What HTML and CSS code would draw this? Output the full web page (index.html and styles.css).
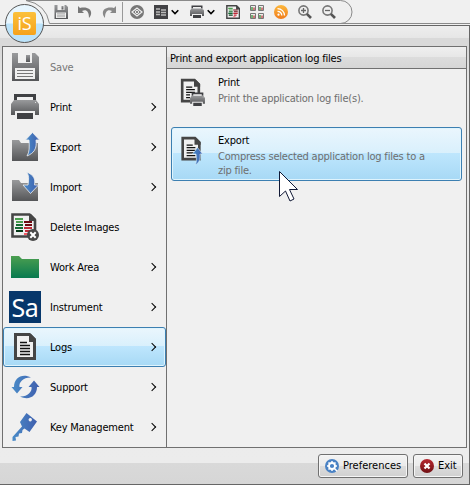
FILE: index.html
```html
<!DOCTYPE html>
<html lang="en">
<head>
<meta charset="utf-8">
<title>Application menu</title>
<link rel="stylesheet" href="styles.css">
</head>
<body>
<svg class="defs" width="0" height="0">
  <defs>
    <linearGradient id="gray" x2="0" y2="1"><stop stop-color="#999a9c"/><stop offset="1" stop-color="#555658"/></linearGradient>
    <linearGradient id="green" x2="0" y2="1"><stop stop-color="#4c9f50"/><stop offset="1" stop-color="#087a50"/></linearGradient>
    <linearGradient id="blue" x2="1" y2="0"><stop stop-color="#4a8cc8"/><stop offset="1" stop-color="#3f5fae"/></linearGradient>
    <linearGradient id="red" x2="0" y2="1"><stop stop-color="#b82830"/><stop offset="1" stop-color="#701014"/></linearGradient>
    <linearGradient id="orange" x2="0" y2="1"><stop stop-color="#fcb83c"/><stop offset="1" stop-color="#f07c1c"/></linearGradient>
    <symbol id="save" viewBox="0 0 32 32">
      <path fill="url(#gray)" d="M3 2h23l4 4v24H3z"/><path fill="#f0f0f0" d="M9 2h14v10H9zM6 17h20v11H6z"/><path fill="url(#gray)" d="M17 4h4v7h-4z"/><path stroke="#777" d="M8 19.500h16M8 22.500h16M8 25.500h16"/>
    </symbol>
    <symbol id="printer" viewBox="0 0 32 32">
      <path fill="#404144" d="M5 3h22v6h-3V6H8v3H5zM8 22h16v6H8z"/><path fill="url(#gray)" d="M5 9h22l3 4v11h-4v-4H6v4H2V13z"/><path fill="#ddd" d="M26 11h1v1h-1z"/>
    </symbol>
    <symbol id="folder" viewBox="0 0 32 32"><path d="M3 30V9h7l2 3h17v18z"/></symbol>
    <symbol id="doc" viewBox="0 0 32 32">
      <path fill="#f0f0f0" stroke="#454545" stroke-width="3" d="M6.500 3.500h14l5 5v19h-19z"/><path fill="#454545" d="M20 3h2l5 5v3h-7z"/><path stroke="#111" stroke-width="1.500" d="M11 11.500h7M11 14.500h10M11 17.500h10M11 20.500h10M11 23.500h10"/>
    </symbol>
    <symbol id="gels" viewBox="0 0 32 32">
      <path fill="#f0f0f0" stroke="#454545" stroke-width="2.600" d="M3.500 3.500h17l5.500 5.500v16.500h-22.500z"/><path fill="#454545" d="M20 3h2l5 5v2h-7z"/>
      <path stroke="#4c9f50" stroke-width="2" d="M6 8h8M7 11h7"/><path stroke="#176b35" stroke-width="2" d="M7 14h7M6 17h8"/><path stroke="#063818" stroke-width="2" d="M7 20h7"/>
      <path stroke="#700a12" stroke-width="2" d="M15 11h8M16 14h7"/><path stroke="#c02a38" stroke-width="2" d="M15 17h8M16 20h5"/><path stroke="#f05a64" stroke-width="2" d="M15 23h4"/>
    </symbol>
    <symbol id="chev" viewBox="0 0 8 8"><path fill="none" stroke="#000" stroke-width="1.600" d="M.7 2.200 4 5.500l3.300-3.300"/></symbol>
    <symbol id="arrowup" viewBox="0 0 32 32"><path stroke="#f0f0f0" stroke-width=".8" d="M18 25c2.500-4 2.500-9 2-16h-3.500L23.500 1.500 30.500 9H27c1 9-2 13-9 16z"/></symbol>
  </defs>
</svg>

<div class="toolbar">
  <div class="tools">
    <span class="tool"><svg width="16" height="16"><use href="#save"/></svg></span>
    <span class="tool"><svg width="16" height="14" viewBox="0 0 16 14"><path fill="#777" d="M1 1v7h6L5 6c4-2 7 0 7 7 5-6 1-12-9-10z"/></svg></span>
    <span class="tool"><svg width="16" height="14" viewBox="0 0 16 14"><path fill="#888" d="M15 1v7H9l2-2c-4-2-7 0-7 7C-1 7 3 1 13 3z"/></svg></span>
    <span class="sep"></span>
    <span class="tool"><svg width="14" height="14" viewBox="0 0 14 14"><circle cx="7" cy="7" r="7" fill="#777"/><path fill="none" stroke="#f0f0f0" stroke-width="1.200" d="m2 7 5-4 5 4-5 4z"/><circle cx="7" cy="7" r="1.600" fill="none" stroke="#f0f0f0"/></svg></span>
    <span class="tool"><svg width="14" height="14" viewBox="0 0 14 14"><path fill="#424245" d="M0 0h14v14H0z"/><path stroke="#bbb" stroke-width="1.500" d="M2 4h4M2 7h4M2 9.500h4M7 5h5M7 7.500h5M7 10h5"/></svg></span>
    <span class="drop"><svg width="8" height="8"><use href="#chev"/></svg></span>
    <span class="tool"><svg width="16" height="16"><use href="#printer"/></svg></span>
    <span class="drop"><svg width="8" height="8"><use href="#chev"/></svg></span>
    <span class="tool"><svg width="14" height="14" viewBox="2 2 25 25"><use href="#gels" width="32" height="32"/></svg></span>
    <span class="tool"><svg width="14" height="14" viewBox="0 0 14 14"><g fill="#eee" stroke="#777"><path d="M.5.5h5v5h-5zM8.500.5h5v5h-5zM.5 8.500h5v5h-5zM8.500 8.500h5v5h-5z"/></g><path stroke="#4c9f50" stroke-width="1.500" d="M2 2v3M10 2v3M2 10v3M10 10v3"/><path stroke="#c03a40" stroke-width="1.300" d="M4 2.500v2.500M12 2.500v2.500M4 10.500v2.500M12 10.500v2.500"/></svg></span>
    <span class="tool"><svg width="14" height="14" viewBox="0 0 14 14"><circle cx="7" cy="7" r="7" fill="url(#orange)"/><circle cx="4.500" cy="9.700" r="1.100" fill="#fff"/><path fill="none" stroke="#fff" stroke-width="1.300" d="M3.500 6.300a4.300 4.300 0 0 1 4.300 4.300M3.500 3.600a7 7 0 0 1 7 7"/></svg></span>
    <span class="tool"><svg width="14" height="14" viewBox="0 0 14 14"><circle cx="5.500" cy="5.500" r="4.600" fill="none" stroke="#777" stroke-width="1.600"/><path stroke="#555" stroke-width="2.600" d="m8.800 8.800 4.200 4.200"/><path stroke="#666" stroke-width="1.300" d="M3 5.500h5M5.500 3v5"/></svg></span>
    <span class="tool"><svg width="14" height="14" viewBox="0 0 14 14"><circle cx="5.500" cy="5.500" r="4.600" fill="none" stroke="#777" stroke-width="1.600"/><path stroke="#555" stroke-width="2.600" d="m8.800 8.800 4.200 4.200"/><path stroke="#666" stroke-width="1.300" d="M3 5.500h5"/></svg></span>
  </div>
  <svg class="outline" width="470" height="25" viewBox="0 0 470 25" fill="none" stroke="#8a8a8a"><path d="M26 .5h314.500a11.500 11.500 0 0 1 0 23M26 .5Q46 4 49.500 23.500H470"/></svg>
</div>
<div class="orb"><span class="orb-tile">iS</span></div>

<div class="window">
  <div class="panes">
    <nav class="menu">
      <div class="row disabled"><svg width="32" height="32"><use href="#save"/></svg><span>Save</span></div>
      <div class="row more"><svg width="32" height="32"><use href="#printer"/></svg><span>Print</span></div>
      <div class="row more"><svg width="32" height="32"><use href="#folder" fill="url(#gray)"/><use href="#arrowup" fill="url(#blue)"/></svg><span>Export</span></div>
      <div class="row more"><svg width="32" height="32"><use href="#folder" fill="url(#gray)"/><path fill="url(#blue)" stroke="#f0f0f0" stroke-width=".8" d="M17.500 1c7.500 3 9 7 8 13h4l-8 8.500-7.500-8.500h5c1-6 1-10-1.500-13z"/></svg><span>Import</span></div>
      <div class="row"><svg width="32" height="32"><use href="#gels"/><circle cx="24" cy="24" r="6" fill="#484848"/><path stroke="#fff" stroke-width="2" d="m21.300 21.300 5.400 5.400m0-5.400-5.400 5.400"/></svg><span>Delete Images</span></div>
      <div class="row more"><svg width="32" height="32"><path fill="url(#green)" d="M2 27V5h8l3 3h17v19z"/></svg><span>Work Area</span></div>
      <div class="row more"><b class="sa">Sa</b><span>Instrument</span></div>
      <div class="row more selected"><svg width="32" height="32"><use href="#doc"/></svg><span>Logs</span></div>
      <div class="row more"><svg width="32" height="32" fill="url(#blue)"><path d="M22 6.500C13 2 5 7 5 16H2.500l5.500 6.500 5.500-6.500H10.500c-1-5 4.500-10 11.500-9.500zM11 25.500C20 30 28 25 28 16h2.500l-5.500-6.500-5.500 6.500h3c1 5-4.500 10-11.500 9.500z"/></svg><span>Support</span></div>
      <div class="row more"><svg width="32" height="32"><path fill="url(#blue)" fill-rule="evenodd" d="M17.500 2 28 10.500 20.500 21l-5-3.500-2 1.500-.5 3-3 .5-.5 3-3 .5L7 29.500 3.500 30v-4L13 15.500 11 11zm3.700 5a1.700 1.700 0 1 0 .1 0z"/></svg><span>Key Management</span></div>
    </nav>
    <section class="detail">
      <h1>Print and export application log files</h1>
      <div class="option">
        <svg width="32" height="32"><svg x="-1" y="0" width="29" height="28"><use href="#doc"/></svg><rect x="13" y="17" width="15" height="12" fill="#f0f0f0"/><svg x="12" y="14" width="17" height="17"><use href="#printer"/></svg></svg>
        <div class="copy"><strong>Print</strong><p>Print the application log file(s).</p></div>
      </div>
      <div class="option selected">
        <svg width="32" height="32"><svg x="0" y="0" width="28" height="28"><use href="#doc"/></svg><path fill="url(#blue)" stroke="#d9effc" stroke-width=".6" d="M18 30c2-3 1.500-6 1-11h-3.500l5-6.500 5 6.500H23c.5 6-1 9-5 11z"/></svg>
        <div class="copy"><strong>Export</strong><p>Compress selected application log files to a<br>zip file.</p></div>
      </div>
    </section>
  </div>
  <footer class="footer">
    <button class="prefs"><svg width="14" height="14" viewBox="0 0 14 14"><circle cx="7" cy="7" r="7" fill="#4a82c4"/><circle cx="7" cy="7" r="3" fill="none" stroke="#fff" stroke-width="1.800"/><path stroke="#fff" stroke-width="1.500" d="M7 2v2M7 10v2M2 7h2M10 7h2M3.500 3.500l1.300 1.300M10.500 3.500 9.200 4.800M3.500 10.500l1.300-1.300M9.200 9.200l3 3"/></svg><span>Preferences</span></button>
    <button class="exit"><svg width="14" height="14" viewBox="0 0 14 14"><circle cx="7" cy="7" r="7" fill="url(#red)"/><path stroke="#fff" stroke-width="2.200" d="m4.500 4.500 5 5m0-5-5 5"/></svg><span>Exit</span></button>
  </footer>
</div>
<svg class="cursor" width="22" height="33" viewBox="0 0 22 33"><path fill="#fff" stroke="#111936" d="M.5.5v25l6-5.500 4.500 10 4-2-4.500-9.500h8z"/></svg>
</body>
</html>
```

FILE: styles.css
```css
* { box-sizing: border-box; }
body {
  margin: 0;
  width: 470px;
  height: 485px;
  overflow: hidden;
  position: relative;
  background: #f0f0f0;
  color: #000;
  font: 11px/16px "DejaVu Sans Condensed", "DejaVu Sans", sans-serif;
  font-stretch: condensed;
  letter-spacing: -0.2px;
}
svg { display: block; flex: none; }
.defs { position: absolute; }

.toolbar { position: relative; height: 25px; padding-left: 49px; }
.outline { position: absolute; left: 0; top: 0; }
.tools { display: flex; align-items: center; height: 24px; }
.tool { width: 24px; display: flex; justify-content: center; }
.drop { width: 12px; margin-left: -2px; margin-right: 2px; }
.sep { width: 1px; height: 20px; margin: 0 2px 0 1px; background: #999; }

.orb {
  position: absolute;
  z-index: 2;
  left: 5px;
  top: 4px;
  width: 39px;
  height: 39px;
  border: 1px solid #555;
  border-radius: 50%;
  background: linear-gradient(#e8f6fe 48%, #bce3fa 52%);
  display: flex;
  align-items: center;
  justify-content: center;
}
.orb-tile {
  width: 23px;
  height: 23px;
  border-radius: 2px;
  background: linear-gradient(#fbc13c, #f5a21c);
  color: #fff;
  font: 18px/23px "Open Sans", sans-serif;
  text-align: center;
}

.window {
  height: 460px;
  padding: 20px 2px 0 2px;
  border: 1px solid #666;
  border-left: 0;
  background: linear-gradient(#eee, #e6e6e6 12px, #d9d9d9 12px, #d9d9d9 24px, #e8e8e8 60px, #ececec 437px, #d9d9d9 437px, #d6d6d6);
}
.panes {
  display: flex;
  width: 465px;
  height: 402px;
  border: 1px solid #707070;
  background: #f0f0f0;
}
.menu { width: 164px; border-right: 1px solid #707070; }
.row {
  display: flex;
  align-items: center;
  gap: 9px;
  height: 40px;
  padding: 0 5px;
  border: 1px solid transparent;
}
.row span { flex: 1; padding-top: 2px; }
.row.more::after {
  content: "";
  width: 5px;
  height: 5px;
  margin-right: 5px;
  border: solid #000;
  border-width: 1.5px 1.5px 0 0;
  transform: rotate(45deg);
}
.disabled { color: #777; }
.selected {
  border: 1px solid #3c7fb1;
  border-radius: 3px;
  background: linear-gradient(#eaf6fd, #d9f0fc 48%, #bee6fd 48%, #a7d9f5);
  box-shadow: inset 0 0 0 1px #dff4fd;
}
.sa {
  width: 32px;
  height: 32px;
  background: #07376b;
  color: #fff;
  font: 25px/33px "Noto Sans", sans-serif;
  letter-spacing: -0.5px;
  text-align: center;
}

.detail { flex: 1; }
h1 {
  height: 22px;
  margin: 0;
  padding-left: 3px;
  border-bottom: 1px solid #707070;
  background: linear-gradient(#efefef, #e7e7e7 48%, #dcdcdc 48%, #d6d6d6);
  font: inherit;
  line-height: 23px;
}
.option {
  display: flex;
  gap: 9px;
  width: 291px;
  height: 54px;
  margin: 0 0 4px 4px;
  padding: 7px 5px 0;
}
.option:not(.selected) { border: 1px solid transparent; }
.copy { margin-top: -2px; }
.copy strong { display: block; font-weight: normal; }
.copy p { margin: 1px 0 0; line-height: 14px; color: #6e6e6e; }

.footer { display: flex; justify-content: flex-end; gap: 5px; padding: 6px 4px 0 0; }
button {
  display: flex;
  align-items: center;
  gap: 4px;
  height: 24px;
  padding: 0 6px;
  border: 1px solid #707070;
  border-radius: 3px;
  background: linear-gradient(#f3f3f3, #ebebeb 48%, #dddddd 48%, #d0d0d0);
  box-shadow: inset 0 0 0 1px #f6f6f6;
  color: #000;
  font: inherit;
  letter-spacing: 0;
}
.prefs { width: 90px; }
.exit { width: 50px; }
.cursor { position: absolute; z-index: 3; left: 279px; top: 171px; }
```
